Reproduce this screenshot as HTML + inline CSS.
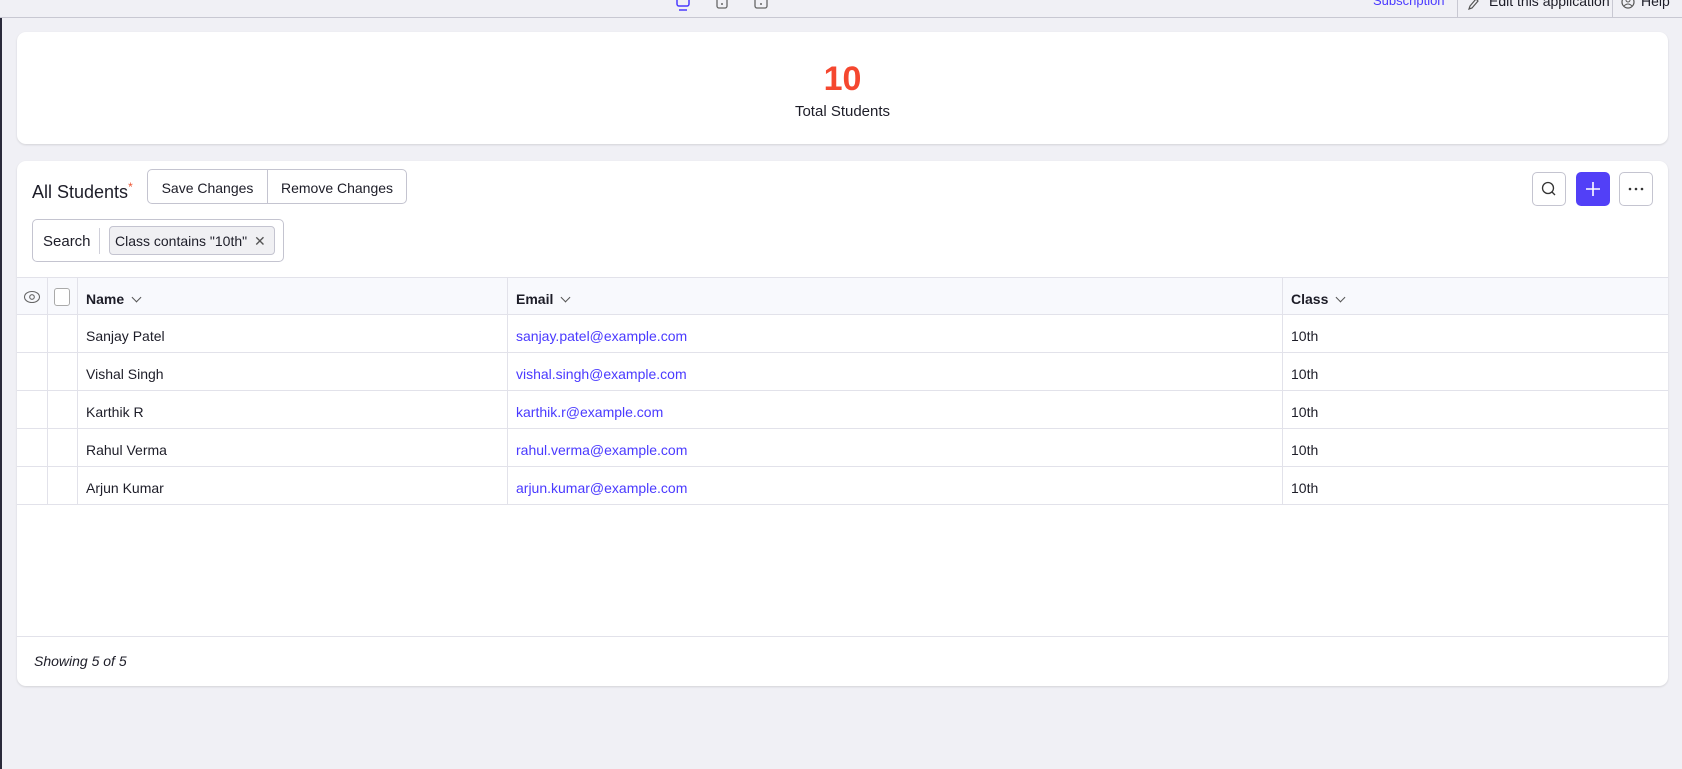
<!DOCTYPE html>
<html><head><style>
*{box-sizing:border-box;margin:0;padding:0}
body{width:1682px;height:769px;background:#f0f0f5;font-family:"Liberation Sans",sans-serif;color:#1d1d28;position:relative;overflow:hidden}
.topbar{position:absolute;left:0;top:0;width:1682px;height:18px;background:#f0f0f5;border-bottom:1px solid #c8c8d2}
.leftline{position:absolute;left:0;top:18px;width:2px;height:751px;background:#2a2a3a}
.card{position:absolute;background:#fff;border-radius:9px;box-shadow:0 1px 2px rgba(0,0,0,.12)}
.abs{position:absolute}
.btn{position:absolute;border:1px solid #c4c4d0;background:#fff;border-radius:5px}
.row{position:absolute;left:0;width:1651px;height:38px;border-bottom:1px solid #e2e2ea;font-size:14px}
.row span{position:absolute;top:13px}
.vl{position:absolute;top:0;width:1px;height:100%;background:#e2e2ea}
.mail{color:#4a3aff}
.chev{display:inline-block;width:7px;height:7px;border-right:1px solid #555;border-bottom:1px solid #555;transform:rotate(45deg);margin-left:9px;position:relative;top:-3px}
</style></head><body>
<div class="topbar">
  <svg class="abs" style="left:674px;top:0" width="18" height="12"><rect x="3" y="-4" width="12" height="10" rx="2" fill="none" stroke="#4a3aff" stroke-width="1.5"/><line x1="5" y1="10" x2="13" y2="10" stroke="#4a3aff" stroke-width="1.5"/></svg>
  <svg class="abs" style="left:715px;top:0" width="14" height="10"><rect x="2" y="-4" width="10" height="12" rx="2" fill="none" stroke="#666" stroke-width="1.3"/><circle cx="7" cy="4" r="1" fill="#666"/></svg>
  <svg class="abs" style="left:754px;top:0" width="14" height="10"><rect x="1" y="-4" width="12" height="12" rx="2" fill="none" stroke="#666" stroke-width="1.3"/><circle cx="7" cy="4" r="1" fill="#666"/></svg>
  <div class="abs" style="left:1373px;top:-7px;font-size:13px;color:#4a3aff">Subscription</div>
  <div class="abs" style="left:1457px;top:0;width:1px;height:18px;background:#c8c8d2"></div>
  <svg class="abs" style="left:1467px;top:0" width="12" height="10"><path d="M2 9 L3 6 L9 -1 L11 1 L5 8 Z" fill="none" stroke="#555" stroke-width="1.2"/></svg>
  <div class="abs" style="left:1489px;top:-7px;font-size:14px">Edit this application</div>
  <div class="abs" style="left:1612px;top:0;width:1px;height:18px;background:#c8c8d2"></div>
  <svg class="abs" style="left:1621px;top:0" width="14" height="10"><circle cx="7" cy="2" r="6" fill="none" stroke="#555" stroke-width="1.2"/><circle cx="7" cy="0" r="2" fill="none" stroke="#555" stroke-width="1"/><path d="M3 6 Q7 2 11 6" fill="none" stroke="#555" stroke-width="1"/></svg>
  <div class="abs" style="left:1641px;top:-7px;font-size:14px">Help</div>
</div>
<div class="leftline"></div>

<div class="card" style="left:17px;top:32px;width:1651px;height:112px">
  <div class="abs" style="left:0;width:1651px;top:28px;text-align:center;font-size:34px;font-weight:bold;color:#f5472f">10</div>
  <div class="abs" style="left:0;width:1651px;top:71px;text-align:center;font-size:15px">Total Students</div>
</div>

<div class="card" style="left:17px;top:161px;width:1651px;height:525px">
  <div class="abs" style="left:15px;top:19px;font-size:18px">All Students<sup style="color:#e53;font-size:12px">*</sup></div>
  <div class="btn" style="left:130px;top:8px;width:260px;height:35px">
    <div class="abs" style="left:0;top:2px;width:119px;height:33px;text-align:center;line-height:33px;font-size:14px">Save Changes</div>
    <div class="abs" style="left:119px;top:0;width:1px;height:33px;background:#c4c4d0"></div>
    <div class="abs" style="left:119px;top:2px;width:140px;height:33px;text-align:center;line-height:33px;font-size:14px">Remove Changes</div>
  </div>
  <div class="btn" style="left:1515px;top:11px;width:34px;height:34px"><svg width="32" height="32"><circle cx="15" cy="15" r="5.5" fill="none" stroke="#333" stroke-width="1.3"/><line x1="19" y1="19" x2="22" y2="22" stroke="#333" stroke-width="1.3"/></svg></div>
  <div class="abs" style="left:1559px;top:11px;width:34px;height:34px;background:#5240f7;border-radius:5px"><svg width="34" height="34"><path d="M17 10v14M10 17h14" stroke="#fff" stroke-width="1.6"/></svg></div>
  <div class="btn" style="left:1602px;top:11px;width:34px;height:34px"><svg width="32" height="32"><circle cx="10" cy="16" r="1.3" fill="#333"/><circle cx="16" cy="16" r="1.3" fill="#333"/><circle cx="22" cy="16" r="1.3" fill="#333"/></svg></div>

  <div class="btn" style="left:15px;top:58px;width:252px;height:43px">
    <div class="abs" style="left:10px;top:13px;font-size:15px">Search</div>
    <div class="abs" style="left:66px;top:8px;width:1px;height:26px;background:#d0d0da"></div>
    <div class="abs" style="left:76px;top:6px;width:166px;height:29px;background:#f0f0f3;border:1px solid #c4c4d0;border-radius:4px;font-size:14px;line-height:29px;padding-left:5px">Class contains "10th" <span style="color:#555;margin-left:3px">✕</span></div>
  </div>

  <div class="row" style="top:116px;height:38px;background:#f8f9fd;border-top:1px solid #e2e2ea;font-weight:bold;font-size:14px">
    <svg class="abs" style="left:6px;top:11px" width="18" height="16"><ellipse cx="9" cy="8" rx="7.5" ry="5.5" fill="none" stroke="#666" stroke-width="1.1"/><circle cx="9" cy="8" r="2.3" fill="none" stroke="#666" stroke-width="1.1"/></svg>
    <div class="abs" style="left:37px;top:10px;width:16px;height:18px;border:1px solid #aaa;border-radius:3px;background:#fff"></div>
    <div class="vl" style="left:30px"></div><div class="vl" style="left:60px"></div><div class="vl" style="left:490px"></div><div class="vl" style="left:1265px"></div>
    <span style="left:69px">Name<i class="chev"></i></span>
    <span style="left:499px">Email<i class="chev"></i></span>
    <span style="left:1274px">Class<i class="chev"></i></span>
  </div>
  <div class="row" style="top:154px"><div class="vl" style="left:30px"></div><div class="vl" style="left:60px"></div><div class="vl" style="left:490px"></div><div class="vl" style="left:1265px"></div><span style="left:69px">Sanjay Patel</span><span class="mail" style="left:499px">sanjay.patel@example.com</span><span style="left:1274px">10th</span></div>
  <div class="row" style="top:192px"><div class="vl" style="left:30px"></div><div class="vl" style="left:60px"></div><div class="vl" style="left:490px"></div><div class="vl" style="left:1265px"></div><span style="left:69px">Vishal Singh</span><span class="mail" style="left:499px">vishal.singh@example.com</span><span style="left:1274px">10th</span></div>
  <div class="row" style="top:230px"><div class="vl" style="left:30px"></div><div class="vl" style="left:60px"></div><div class="vl" style="left:490px"></div><div class="vl" style="left:1265px"></div><span style="left:69px">Karthik R</span><span class="mail" style="left:499px">karthik.r@example.com</span><span style="left:1274px">10th</span></div>
  <div class="row" style="top:268px"><div class="vl" style="left:30px"></div><div class="vl" style="left:60px"></div><div class="vl" style="left:490px"></div><div class="vl" style="left:1265px"></div><span style="left:69px">Rahul Verma</span><span class="mail" style="left:499px">rahul.verma@example.com</span><span style="left:1274px">10th</span></div>
  <div class="row" style="top:306px"><div class="vl" style="left:30px"></div><div class="vl" style="left:60px"></div><div class="vl" style="left:490px"></div><div class="vl" style="left:1265px"></div><span style="left:69px">Arjun Kumar</span><span class="mail" style="left:499px">arjun.kumar@example.com</span><span style="left:1274px">10th</span></div>

  <div class="abs" style="left:0;top:475px;width:1651px;height:1px;background:#e2e2ea"></div>
  <div class="abs" style="left:17px;top:492px;font-size:14px;font-style:italic">Showing 5 of 5</div>
</div>
</body></html>
